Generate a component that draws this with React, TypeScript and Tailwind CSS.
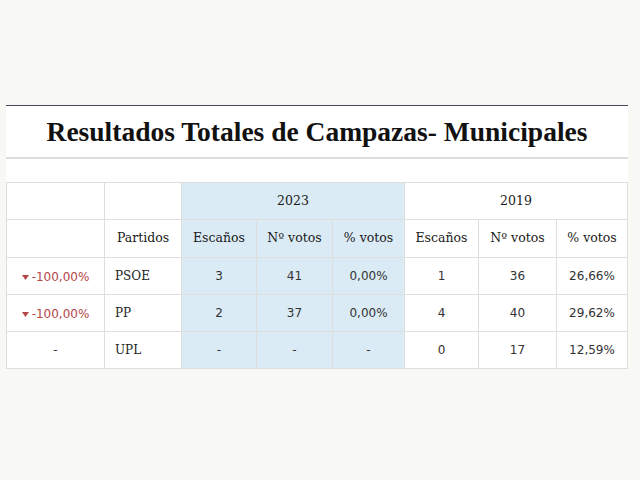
import { FC } from 'react'

interface Row {
  change: string | null
  party: string
  cur: [string, string, string]
  prev: [string, string, string]
}

const rows: Row[] = [
  { change: '-100,00%', party: 'PSOE', cur: ['3', '41', '0,00%'], prev: ['1', '36', '26,66%'] },
  { change: '-100,00%', party: 'PP', cur: ['2', '37', '0,00%'], prev: ['4', '40', '29,62%'] },
  { change: null, party: 'UPL', cur: ['-', '-', '-'], prev: ['0', '17', '12,59%'] },
]

const widths = [98, 77, 75, 76, 72, 74, 78, 71]

const serif = "font-['DejaVu_Serif',serif] text-[12.5px] text-[#1a1a1a]"
const sans = "font-['DejaVu_Sans',sans-serif] text-[12px] text-[#333]"
const cell = 'border border-[#dedede] p-0 align-middle'

const Change: FC<{ value: string | null }> = ({ value }) => {
  if (!value) return <span className="text-[#333]">-</span>
  return (
    <span className="inline-flex items-center gap-[3px] text-[#b5464a]">
      <svg width="7" height="5" viewBox="0 0 7 5" className="mt-[1px]">
        <path d="M0 0h7L3.5 5z" fill="#b5464a" />
      </svg>
      {value}
    </span>
  )
}

const App: FC = () => {
  return (
    <div className="min-h-screen bg-[#f8f8f4] pt-[105px] pl-[6px]">
      <div className="w-[622px] bg-white border-t border-[#454c59]">
        <h1 className="text-center font-['Liberation_Serif',serif] font-bold text-[27.5px] leading-[51px] text-[#111]">
          Resultados Totales de Campazas- Municipales
        </h1>
        <div className="h-[2px] bg-[#dddddd]" />
        <div className="h-[23px]" />
        <table className="w-[622px] table-fixed border-collapse">
          <colgroup>
            {widths.map((w, i) => (
              <col key={i} style={{ width: w }} />
            ))}
          </colgroup>
          <tbody>
            <tr className="h-[37px]">
              <td className={cell} />
              <td className={cell} />
              <td colSpan={3} className={`${cell} ${serif} bg-[#daebf5] text-center`}>
                2023
              </td>
              <td colSpan={3} className={`${cell} ${serif} text-center`}>
                2019
              </td>
            </tr>
            <tr className={`h-[38px] ${serif}`}>
              <td className={cell} />
              <td className={`${cell} text-center`}>Partidos</td>
              <td className={`${cell} bg-[#daebf5] text-center`}>Escaños</td>
              <td className={`${cell} bg-[#daebf5] text-center`}>Nº votos</td>
              <td className={`${cell} bg-[#daebf5] text-center`}>% votos</td>
              <td className={`${cell} text-center`}>Escaños</td>
              <td className={`${cell} text-center`}>Nº votos</td>
              <td className={`${cell} text-center`}>% votos</td>
            </tr>
            {rows.map((r) => (
              <tr key={r.party} className={`h-[37px] ${sans}`}>
                <td className={`${cell} text-center`}>
                  <Change value={r.change} />
                </td>
                <td className={`${cell} pl-[10px] font-['DejaVu_Serif',serif] text-[12px] text-[#222]`}>
                  {r.party}
                </td>
                {r.cur.map((v, i) => (
                  <td key={`c${i}`} className={`${cell} bg-[#daebf5] text-center`}>
                    {v}
                  </td>
                ))}
                {r.prev.map((v, i) => (
                  <td key={`p${i}`} className={`${cell} text-center`}>
                    {v}
                  </td>
                ))}
              </tr>
            ))}
          </tbody>
        </table>
      </div>
    </div>
  )
}

export default App
